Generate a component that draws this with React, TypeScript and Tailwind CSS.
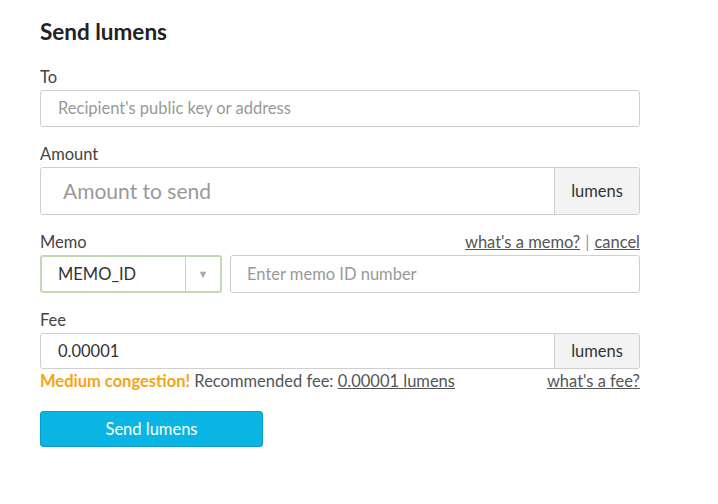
import React from 'react';

const font = { fontFamily: 'Lato, "Liberation Sans", sans-serif' };

export default function App() {
  return (
    <div className="min-h-screen bg-white text-[#333]" style={font}>
      <div className="w-[600px] ml-10 pt-[18px]">
        <h1 className="text-[22.5px] font-bold text-[#222] leading-[28px]">Send lumens</h1>

        {/* To */}
        <div className="mt-[21px]">
          <label className="block text-[16.5px] leading-[20px] text-[#444]">To</label>
          <div className="mt-[3px] h-[37px] border border-[#cfcfcf] rounded-[3px] flex items-center px-[17px]">
            <span className="text-[16.5px] text-[#999]">Recipient's public key or address</span>
          </div>
        </div>

        {/* Amount */}
        <div className="mt-[17px]">
          <label className="block text-[16.5px] leading-[20px] text-[#444]">Amount</label>
          <div className="mt-[3px] h-[48px] border border-[#cfcfcf] rounded-[3px] flex">
            <div className="flex-1 flex items-center px-[22px]">
              <span className="text-[21px] text-[#999]">Amount to send</span>
            </div>
            <div className="w-[85px] bg-[#f3f3f3] border-l border-[#cfcfcf] flex items-center justify-center text-[16.5px] text-[#333] rounded-r-[3px]">
              lumens
            </div>
          </div>
        </div>

        {/* Memo */}
        <div className="mt-[17px]">
          <div className="flex justify-between items-end leading-[20px]">
            <label className="text-[16.5px] text-[#444]">Memo</label>
            <div className="text-[16.5px] text-[#555]">
              <span className="underline">what's a memo?</span>
              <span className="mx-[5px] text-[#999]">|</span>
              <span className="underline">cancel</span>
            </div>
          </div>
          <div className="mt-[3px] flex gap-[8px]">
            <div className="w-[182px] h-[38px] border-2 border-[#c5d8b5] rounded-[3px] flex">
              <div className="flex-1 flex items-center pl-[16px] text-[16.5px] text-[#333]">MEMO_ID</div>
              <div className="w-[35px] border-l border-[#cfcfcf] flex items-center justify-center text-[11px] text-[#aaa]">▼</div>
            </div>
            <div className="flex-1 h-[38px] border border-[#cfcfcf] rounded-[3px] flex items-center px-[16px]">
              <span className="text-[16.5px] text-[#999]">Enter memo ID number</span>
            </div>
          </div>
        </div>

        {/* Fee */}
        <div className="mt-[17px]">
          <label className="block text-[16.5px] leading-[20px] text-[#444]">Fee</label>
          <div className="mt-[3px] h-[36px] border border-[#cfcfcf] rounded-[3px] flex">
            <div className="flex-1 flex items-center px-[17px]">
              <span className="text-[16.5px] text-[#333]">0.00001</span>
            </div>
            <div className="w-[85px] bg-[#f3f3f3] border-l border-[#cfcfcf] flex items-center justify-center text-[16.5px] text-[#333] rounded-r-[3px]">
              lumens
            </div>
          </div>
          <div className="mt-[2px] flex justify-between text-[16.5px] leading-[20px]">
            <div>
              <span className="font-bold text-[#f5a416]">Medium congestion!</span>{' '}
              <span className="text-[#555]">Recommended fee: </span>
              <span className="underline text-[#555]">0.00001 lumens</span>
            </div>
            <span className="underline text-[#555]">what's a fee?</span>
          </div>
        </div>

        <button className="mt-[20px] w-[223px] h-[36px] bg-[#0bb5e3] border border-[#0a9ccb] rounded-[3px] text-white text-[16.5px]">
          Send lumens
        </button>
      </div>
    </div>
  );
}
